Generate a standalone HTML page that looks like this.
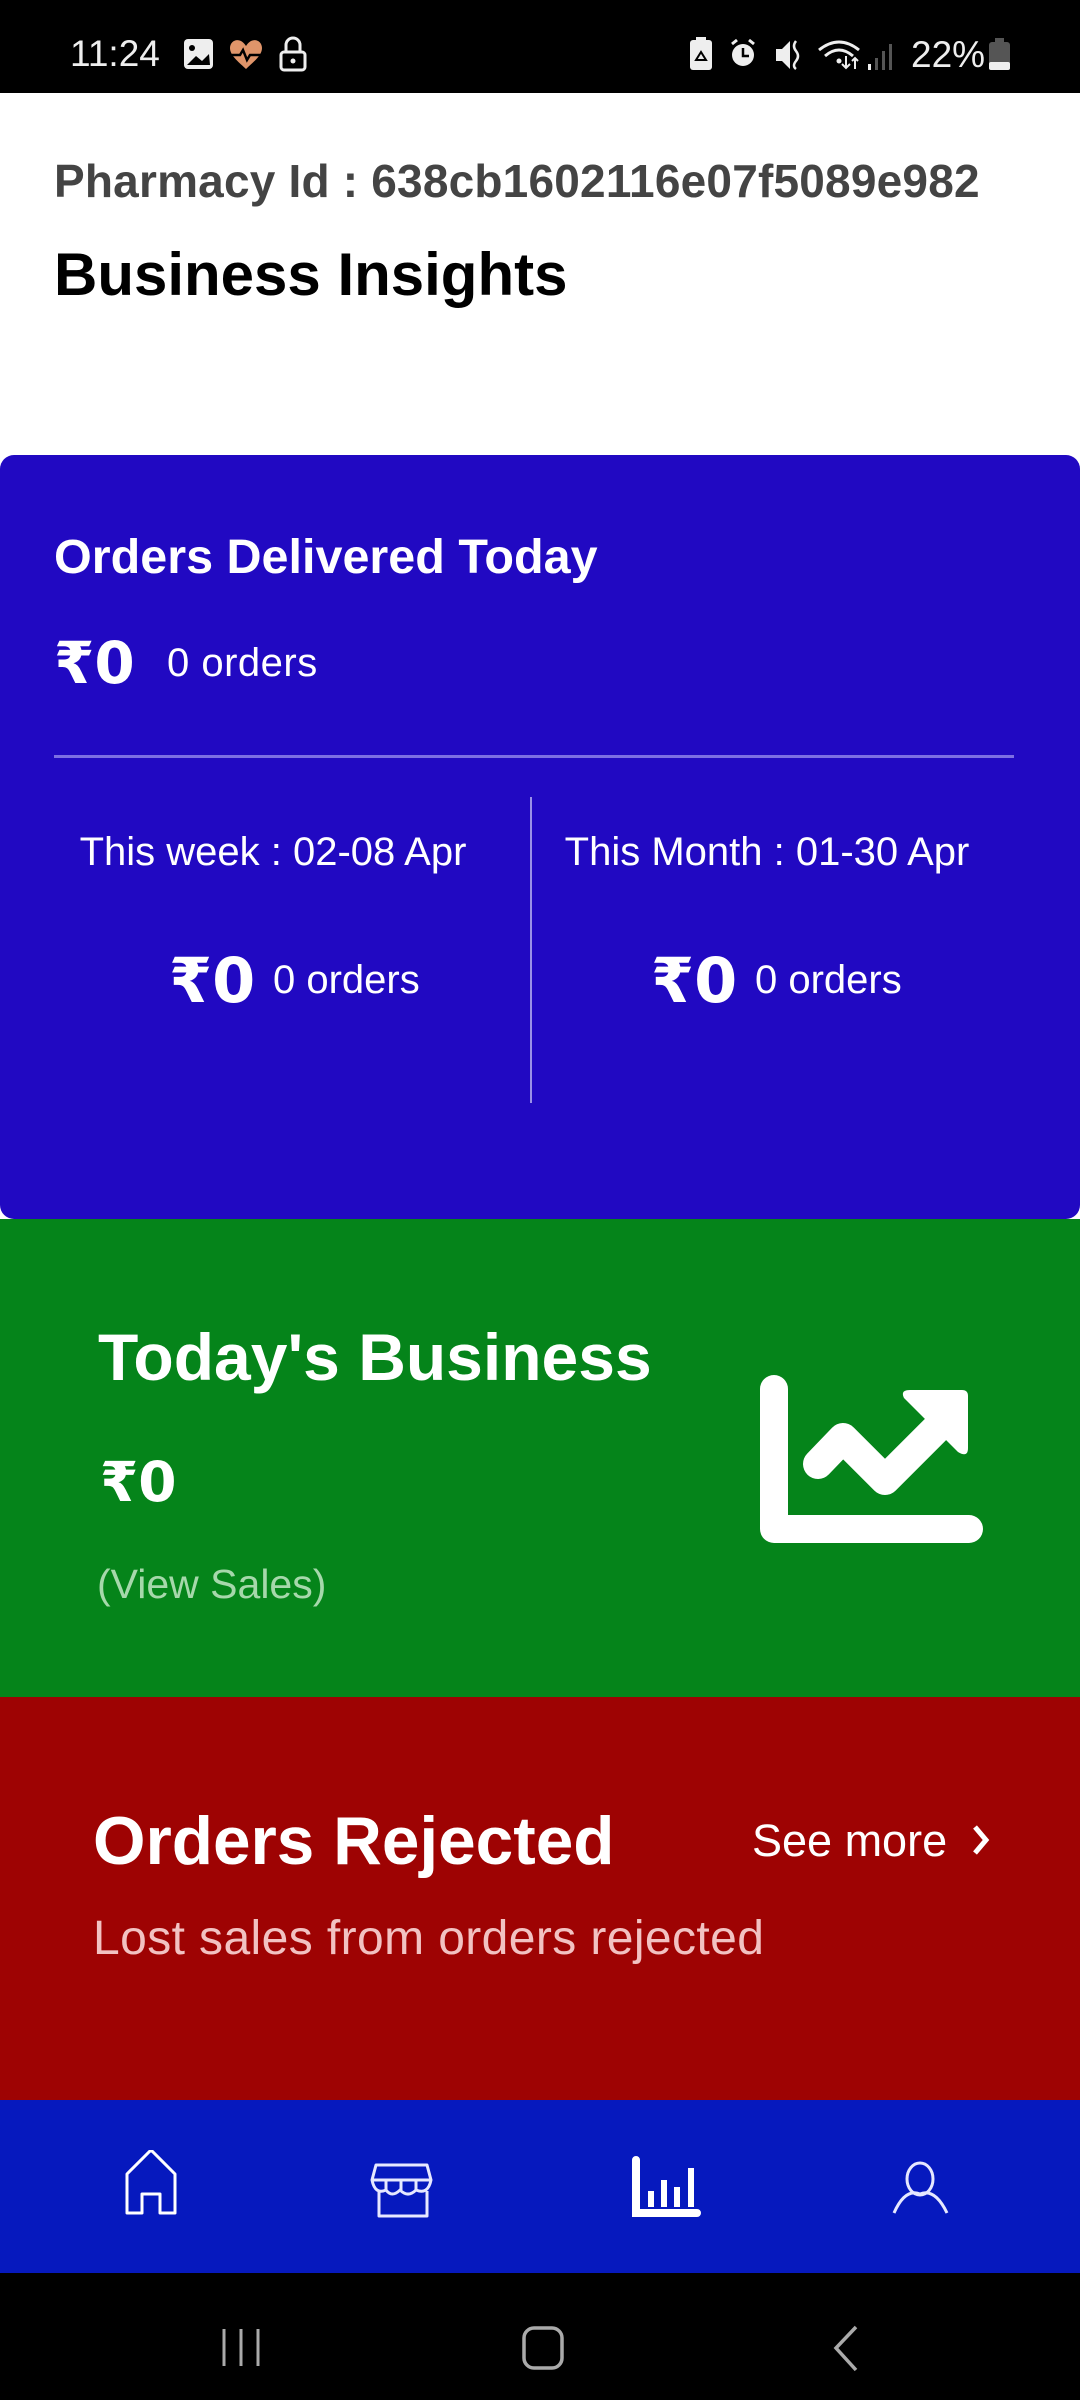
<!DOCTYPE html>
<html><head><meta charset="utf-8"><style>
*{margin:0;padding:0;box-sizing:border-box}
body{width:1080px;height:2400px;position:relative;background:#fff;font-family:"Liberation Sans",Roboto,sans-serif;overflow:hidden}
.a{position:absolute;line-height:1;white-space:nowrap}
.w{color:#fff}
.r{font-family:"DejaVu Sans","Liberation Sans",sans-serif}
</style></head><body>
<div class="a" style="left:0;top:0;width:1080px;height:93px;background:#000"></div>
<div class="a w" style="left:70px;top:35px;font-size:37px;color:#eee">11:24</div>
<svg class="a" style="left:180px;top:36px" width="140" height="36" viewBox="0 0 140 36">
<rect x="4" y="3" width="29" height="30" rx="4" fill="#eee"/><circle cx="12" cy="12" r="3" fill="#000"/><path d="M7 29 L16 20 L22 25 L29 18 L30 29Z" fill="#000"/>
<path d="M66 10 C60 0 50 4 50 12 C50 20 60 27 66 33 C72 27 82 20 82 12 C82 4 72 0 66 10Z" fill="#e0956a"/><path d="M51 19 L60 19 L63 14 L67 24 L70 19 L81 19" stroke="#000" stroke-width="2.5" fill="none"/>
<rect x="101" y="16" width="24" height="18" rx="3" stroke="#eee" stroke-width="3" fill="none"/><path d="M106 16 V9 A7 7 0 0 1 120 9 V16" stroke="#eee" stroke-width="3" fill="none"/><circle cx="113" cy="25" r="2.5" fill="#eee"/>
</svg>
<svg class="a" style="left:688px;top:36px" width="330" height="36" viewBox="0 0 330 36">
<rect x="2" y="4" width="22" height="30" rx="3" fill="#eee"/><rect x="8" y="1" width="10" height="4" fill="#eee"/><path d="M8 24 L13 16 L18 24Z" stroke="#000" stroke-width="2" fill="none"/>
<circle cx="55" cy="19" r="11" fill="#eee"/><path d="M55 12 V20 H61" stroke="#000" stroke-width="2.5" fill="none"/><path d="M44 8 L49 4 M66 8 L61 4" stroke="#eee" stroke-width="3"/>
<path d="M88 13 H94 L102 5 V33 L94 25 H88Z" fill="#eee"/><path d="M108 5 Q104 10 108 15 Q112 20 108 25 Q104 30 108 33" stroke="#eee" stroke-width="2.5" fill="none"/>
<path d="M131 14 Q151 -2 171 14" stroke="#eee" stroke-width="3" fill="none"/><path d="M137 20 Q151 8 165 20" stroke="#eee" stroke-width="3" fill="none"/><circle cx="151" cy="25" r="2.5" fill="#eee"/><path d="M158 20 V32 M154 28 L158 32 L162 28 M167 33 V22 M164 25 L167 22 L170 25" stroke="#eee" stroke-width="2" fill="none"/>
<rect x="180" y="28" width="3" height="6" fill="#eee"/><rect x="187" y="22" width="3" height="12" fill="#555"/><rect x="194" y="15" width="3" height="19" fill="#555"/><rect x="201" y="8" width="3" height="26" fill="#555"/>
<rect x="301" y="6" width="21" height="28" rx="3" fill="#555"/><rect x="307" y="2" width="9" height="5" fill="#555"/><rect x="301" y="26" width="21" height="8" rx="2" fill="#eee"/>
</svg>
<div class="a w" style="left:911px;top:36px;font-size:37px;color:#eee">22%</div>

<div class="a" style="left:54px;top:158px;font-size:46px;font-weight:bold;color:#444;letter-spacing:0.2px">Pharmacy Id : 638cb1602116e07f5089e982</div>
<div class="a" style="left:54px;top:245px;font-size:60px;font-weight:bold;color:#000">Business Insights</div>

<div class="a" style="left:0;top:455px;width:1080px;height:764px;background:#2109C2;border-radius:14px"></div>
<div class="a w" style="left:54px;top:533px;font-size:48.5px;font-weight:bold">Orders Delivered Today</div>
<div class="a w r" style="left:54px;top:634px;font-size:58px;font-weight:bold">₹0</div>
<div class="a w" style="left:167px;top:643px;font-size:40px;letter-spacing:0.5px">0 orders</div>
<div class="a" style="left:54px;top:755px;width:960px;height:3px;background:#7d6fe3"></div>
<div class="a" style="left:530px;top:797px;width:2px;height:306px;background:#9a90e8"></div>
<div class="a w" style="left:0;width:546px;text-align:center;top:832px;font-size:40px">This week : 02-08 Apr</div>
<div class="a w" style="left:532px;width:470px;text-align:center;top:832px;font-size:40px">This Month : 01-30 Apr</div>
<div class="a w r" style="left:169px;top:950px;font-size:62px;font-weight:bold">₹0</div>
<div class="a w" style="left:273px;top:960px;font-size:40px">0 orders</div>
<div class="a w r" style="left:651px;top:950px;font-size:62px;font-weight:bold">₹0</div>
<div class="a w" style="left:755px;top:960px;font-size:40px">0 orders</div>

<div class="a" style="left:0;top:1219px;width:1080px;height:478px;background:#05841A"></div>
<div class="a w" style="left:98px;top:1324px;font-size:66px;font-weight:bold">Today's Business</div>
<div class="a w r" style="left:100px;top:1455px;font-size:55px;font-weight:bold">₹0</div>
<div class="a" style="left:97px;top:1564px;font-size:41px;color:#a6d8ab">(View Sales)</div>
<svg class="a" style="left:750px;top:1365px" width="250" height="190" viewBox="750 1365 250 190">
<path d="M774 1389 V1529 H969" stroke="#fff" stroke-width="28" stroke-linecap="round" stroke-linejoin="round" fill="none"/>
<polyline points="818,1464 843,1438 885,1480 935,1430" stroke="#fff" stroke-width="30" stroke-linejoin="round" stroke-linecap="round" fill="none"/>
<path d="M910 1390 H962 Q968 1390 968 1396 V1448 Q968 1458 958 1452 L904 1398 Q900 1390 910 1390Z" fill="#fff"/>
</svg>

<div class="a" style="left:0;top:1697px;width:1080px;height:403px;background:#9E0303"></div>
<div class="a w" style="left:93px;top:1808px;font-size:67.5px;font-weight:bold">Orders Rejected</div>
<div class="a w" style="left:752px;top:1818px;font-size:45px">See more</div>
<svg class="a" style="left:970px;top:1823px" width="22" height="34"><path d="M5 4 L16 17 L5 30" stroke="#fff" stroke-width="5" fill="none"/></svg>
<div class="a" style="left:93px;top:1915px;font-size:48px;color:#f2c2c2;letter-spacing:0.4px">Lost sales from orders rejected</div>

<div class="a" style="left:0;top:2100px;width:1080px;height:173px;background:#0619BE"></div>
<svg class="a" style="left:0;top:2150px" width="1080" height="75" viewBox="0 2150 1080 75">
<path d="M127 2213 V2174 L151 2150 L175 2174 V2213 H160 V2194 H142 V2213Z" stroke="#fff" stroke-width="3" fill="none" stroke-linejoin="round"/>
<path d="M376 2165 H427 L431 2180 H372Z M372 2180 Q375 2195 386 2190 Q392 2198 400 2190 Q408 2198 416 2190 Q428 2195 431 2180 M379 2191 V2216 H427 V2191 M386 2180 V2190 M401 2180 V2190 M416 2180 V2190" stroke="#e6e8ff" stroke-width="3" fill="none" stroke-linejoin="round"/>
<path d="M636 2160 V2213 H697" stroke="#fff" stroke-width="8" fill="none" stroke-linecap="round"/>
<rect x="648" y="2191" width="6" height="16" fill="#fff"/><rect x="661" y="2180" width="6" height="27" fill="#fff"/><rect x="674" y="2187" width="6" height="20" fill="#fff"/><rect x="688" y="2168" width="6" height="39" fill="#fff"/>
<ellipse cx="920" cy="2179" rx="13" ry="16" stroke="#e6e8ff" stroke-width="3" fill="none"/>
<path d="M894 2213 Q905 2188 920 2194 Q935 2188 947 2213" stroke="#e6e8ff" stroke-width="3" fill="none"/>
</svg>

<div class="a" style="left:0;top:2273px;width:1080px;height:127px;background:#000"></div>
<svg class="a" style="left:0;top:2300px" width="1080" height="80" viewBox="0 2300 1080 80">
<path d="M224 2329 V2366 M241 2329 V2366 M258 2329 V2366" stroke="#aaa" stroke-width="3"/>
<rect x="524" y="2328" width="38" height="40" rx="10" stroke="#aaa" stroke-width="3.5" fill="none"/>
<path d="M856 2327 L836 2348 L856 2370" stroke="#aaa" stroke-width="3.5" fill="none"/>
</svg>
</body></html>
